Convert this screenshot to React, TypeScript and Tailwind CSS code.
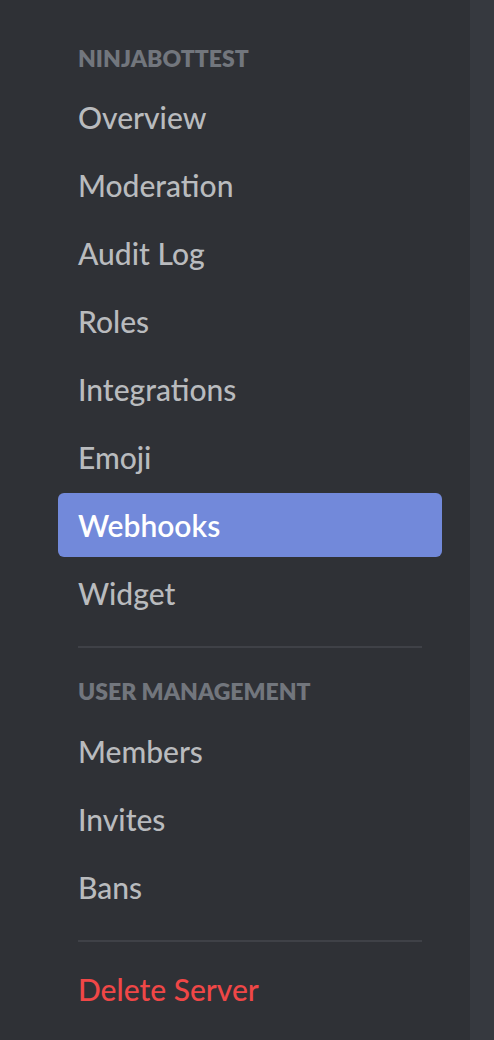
export default function App() {
  const serverItems = ["Overview", "Moderation", "Audit Log", "Roles", "Integrations", "Emoji", "Webhooks", "Widget"];
  const userItems = ["Members", "Invites", "Bans"];

  return (
    <div className="flex h-[1040px] w-[494px] overflow-hidden bg-[#36393f] font-['Lato',sans-serif]">
      <div className="flex w-[470px] flex-col bg-[#2f3136] pl-[58px] pt-[42px]">
        <div className="mb-[11px] h-8 pl-5 text-[23px] font-extrabold uppercase leading-8 text-[#72767d]">
          NinjaBotTest
        </div>
        {serverItems.map((item) => (
          <div
            key={item}
            className={
              item === "Webhooks"
                ? "mb-1 flex h-16 w-[384px] items-center rounded-md bg-[#7289da] pl-5 text-[30px] font-semibold text-white"
                : "mb-1 flex h-16 w-[384px] items-center rounded-md pl-5 text-[30px] font-medium text-[#b9bbbe]"
            }
          >
            {item}
          </div>
        ))}
        <div className="ml-5 mt-[17px] h-[2px] w-[344px] bg-[#3f4147]" />
        <div className="mb-[12px] mt-[27px] h-8 pl-5 text-[23px] font-extrabold uppercase leading-8 text-[#72767d]">
          User Management
        </div>
        {userItems.map((item) => (
          <div
            key={item}
            className="mb-1 flex h-16 w-[384px] items-center rounded-md pl-5 text-[30px] font-medium text-[#b9bbbe]"
          >
            {item}
          </div>
        ))}
        <div className="ml-5 mt-[17px] h-[2px] w-[344px] bg-[#3f4147]" />
        <div className="mt-[15px] flex h-16 w-[384px] items-center rounded-md pl-5 text-[30px] font-medium text-[#f04747]">
          Delete Server
        </div>
      </div>
    </div>
  );
}
